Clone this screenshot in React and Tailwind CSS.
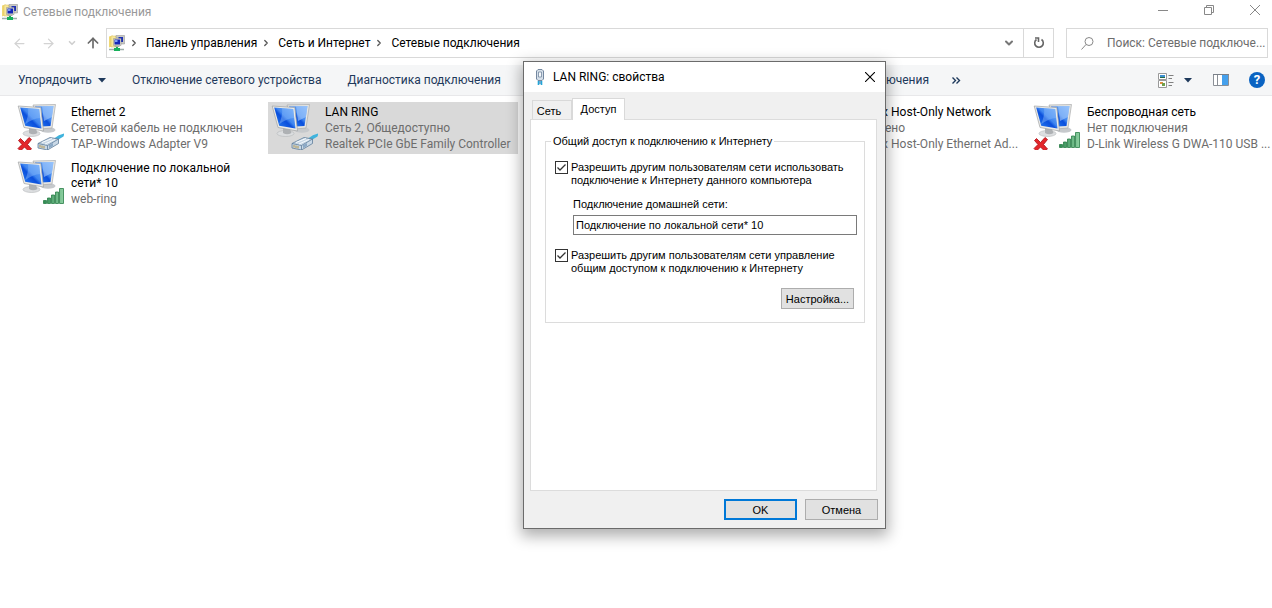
import { ArrowLeft, ArrowRight, ArrowUp, ChevronDown, ChevronRight } from 'lucide-react';

const breadcrumbs = ['Панель управления', 'Сеть и Интернет', 'Сетевые подключения'];

const commands = [
  'Отключение сетевого устройства',
  'Диагностика подключения',
  'Переименование подключения',
  'Просмотр состояния подключения',
];

const connections = [
  { id: 1, name: 'Ethernet 2', status: 'Сетевой кабель не подключен', device: 'TAP-Windows Adapter V9', kind: 'cable', off: true },
  { id: 2, name: 'LAN RING', status: 'Сеть 2, Общедоступно', device: 'Realtek PCIe GbE Family Controller', kind: 'cable', selected: true },
  { id: 3, name: 'VirtualBox Host-Only Network', status: 'Подключено', device: 'VirtualBox Host-Only Ethernet Ad...', kind: 'cable', place: 'col-start-4' },
  { id: 4, name: 'Беспроводная сеть', status: 'Нет подключения', device: 'D-Link Wireless G DWA-110 USB ...', kind: 'wifi', off: true },
  { id: 5, name: 'Подключение по локальной сети* 10', device: 'web-ring', kind: 'wifi' },
];

function FolderIcon() {
  return (
    <svg width="16" height="16" viewBox="0 0 16 16" className="shrink-0" aria-hidden="true">
      <path d="M0 1.5L4 0.5V11L0 12.5Z" fill="#f0d873" />
      <path d="M2 1h5v11H2z" fill="#f8e89a" stroke="#d8bc55" strokeWidth="0.5" />
      <path d="M7 0.5h8.5v8.5H11V2.5H7z" fill="#c9c9c4" stroke="#8f8f8c" strokeWidth="0.5" />
      <path d="M9.5 2h4.5v5h-4.5z" fill="#1d2fb4" />
      <path d="M4.5 3.5h7.5v7H4.5z" fill="#d8d6cc" stroke="#8b8b88" strokeWidth="0.5" />
      <path d="M5.5 4.5h5.5v5H5.5z" fill="#1526b8" />
      <path d="M6 5h2.5v2H6z" fill="#7d9cf5" />
      <path d="M5.5 11h5v1h-5z" fill="#a9a9a5" />
      <path d="M7 12h2v1h2v3H5v-3h2z" fill="#17b05b" />
      <path d="M0 13.8h5v1.4H0zM11 13.8h4v1.4h-4z" fill="#9fb0ab" />
    </svg>
  );
}

function AdapterIcon({ kind, off }) {
  return (
    <svg width="48" height="48" viewBox="0 0 48 48" className="shrink-0" aria-hidden="true">
      <defs>
        <linearGradient id="screen" x1="0" y1="1" x2="1" y2="0">
          <stop offset="0" stopColor="#2f86f5" />
          <stop offset="0.45" stopColor="#0a4fdc" />
          <stop offset="0.55" stopColor="#3f86f0" />
          <stop offset="1" stopColor="#7db4fa" />
        </linearGradient>
        <linearGradient id="bars" x1="0" y1="0" x2="1" y2="0">
          <stop offset="0" stopColor="#2d8a50" />
          <stop offset="1" stopColor="#8ccfa0" />
        </linearGradient>
      </defs>
      {/* rear monitor */}
      <ellipse cx="32" cy="28" rx="7.500" ry="2.800" fill="#c6c9cc" />
      <path d="M17 3L39.500 2.500L36 26L24 27Z" fill="#e6e6e3" stroke="#a9abac" strokeWidth="0.7" />
      <path d="M19 4.500L37.500 4L34.500 24L25 24.500Z" fill="url(#screen)" />
      <path d="M26 4.300L37.500 4L36 15L28 19Z" fill="#a9cdfb" opacity="0.6" />
      {/* front monitor */}
      <ellipse cx="15.500" cy="31.500" rx="8.500" ry="3" fill="#dcdee0" stroke="#b4b7b9" strokeWidth="0.6" />
      <path d="M13 26L20 27L21.500 31Q17 33.500 13 31Z" fill="#aeb1b4" />
      <path d="M2.200 4L24.800 5.500L27.500 29L8 25.500Z" fill="#ebebe8" stroke="#9fa2a4" strokeWidth="0.7" />
      <path d="M4.200 5.600L23.200 7L25.500 26.600L9.200 23.800Z" fill="url(#screen)" />
      <path d="M12 6.200L23.200 7L24.200 16Q17 16 9 22.500Q13 13 12 6.200Z" fill="#8cbcfa" opacity="0.45" />
      {kind === 'cable' && (
        <>
          <path d="M38 36.500Q43 32.500 48.500 31.500L47.500 34.500Q44 36 41 39.500Z" fill="#3fb3dd" />
          <path d="M22 41.500L34 35.500L42.500 37V41.500L31.500 48L22 46Z" fill="#c9d8e6" stroke="#5f7d9b" strokeWidth="0.8" />
          <path d="M22 41.500L31.500 43.500V48M31.500 43.500L42.500 37" fill="none" stroke="#5f7d9b" strokeWidth="0.8" />
          <path d="M26 40.500L36 36.500M29 42L39 37.500" stroke="#f5f9fc" strokeWidth="1" />
          <path d="M33 43L37 41V44L33 46.200Z" fill="#8ba9c6" />
          <path d="M24 43V45.500M26 43.500V46M28 44V46.500" stroke="#b3954a" strokeWidth="1" />
        </>
      )}
      {kind === 'wifi' && (
        <g fill="url(#bars)" stroke="#2a7d48" strokeWidth="0.8">
          <path d="M27.500 42.500h3v3h-3zM31.500 40h3v5.500h-3zM35.500 37h3v8.500h-3zM39.500 34h3v11.500h-3zM43.500 30.500h4v15h-4z" />
        </g>
      )}
      {off && (
        <path d="M4.500 36.500L8.500 40.500L13 35.500L15.500 37.500L11.500 42.500L15.500 47L12.500 49L8.500 45L4.500 49L2 46.500L6 42.500L2.500 38.500Z" fill="#e3262b" stroke="#a90e14" strokeWidth="0.8" />
      )}
    </svg>
  );
}

function Connection({ item }) {
  return (
    <li className={`flex h-[52px] min-w-0 pl-[2px] ${item.selected ? 'bg-[#d9d9d9]' : ''} ${item.place || ''}`}>
      <AdapterIcon kind={item.kind} off={item.off} />
      <div className="ml-[7px] min-w-0 flex-1 leading-4 text-[#6d6d6d]">
        <p className={item.status ? 'truncate pt-0.5 text-black' : 'pt-[3px] pr-8 leading-[15px] text-black'}>{item.name}</p>
        {item.status && <p className="truncate">{item.status}</p>}
        <p className="truncate">{item.device}</p>
      </div>
    </li>
  );
}

function TitleBar() {
  return (
    <header className="flex h-6 items-center pl-[2px] pr-3 text-[#999]">
      <FolderIcon />
      <h1 className="ml-[5px] flex-1">Сетевые подключения</h1>
      <div className="flex gap-9 pb-1">
        <button aria-label="Свернуть" className="flex h-5 w-[10px] items-center justify-center">
          <svg width="10" height="10" viewBox="0 0 10 10"><path d="M0 5.500h10" stroke="#888" /></svg>
        </button>
        <button aria-label="Развернуть" className="flex h-5 w-[10px] items-center justify-center">
          <svg width="10" height="10" viewBox="0 0 10 10" fill="none" stroke="#888"><path d="M0.500 2.500h7v7h-7zM2.500 2.500v-2h7v7h-2" /></svg>
        </button>
        <button aria-label="Закрыть" className="flex h-5 w-[10px] items-center justify-center">
          <svg width="10" height="10" viewBox="0 0 10 10"><path d="M0 0l10 10M10 0l-10 10" stroke="#888" /></svg>
        </button>
      </div>
    </header>
  );
}

function AddressBar() {
  return (
    <div className="mt-1 flex h-[30px] items-center pr-1">
      <nav className="flex w-[106px] items-center pl-3" aria-label="Навигация">
        <button aria-label="Назад"><ArrowLeft className="h-[15px] w-[15px] text-[#d3d3d3]" /></button>
        <button aria-label="Вперед" className="ml-3.5"><ArrowRight className="h-[15px] w-[15px] text-[#d3d3d3]" /></button>
        <button aria-label="Последние" className="ml-[11px]"><ChevronDown className="h-2.5 w-2.5 text-[#cfcfcf]" strokeWidth={4} /></button>
        <button aria-label="Вверх" className="ml-2"><ArrowUp className="h-4 w-4 text-[#6a6a6a]" strokeWidth={2.500} /></button>
      </nav>
      <div className="flex h-[30px] min-w-0 flex-1 items-center border border-[#d9d9d9]">
        <div className="flex min-w-0 flex-1 items-center pl-0.5">
          <FolderIcon />
          {breadcrumbs.map((crumb) => (
            <div key={crumb} className="flex items-center">
              <ChevronRight className="ml-1 mr-[7px] h-2.5 w-2.5 text-[#555]" strokeWidth={3} />
              <a href="#" className="text-black">{crumb}</a>
            </div>
          ))}
        </div>
        <button aria-label="Предыдущие расположения" className="px-2"><ChevronDown className="h-3 w-3 text-[#777]" strokeWidth={4} /></button>
        <button aria-label="Обновить" className="flex h-7 w-[30px] items-center justify-center border-l border-[#d9d9d9]">
          <svg width="12" height="12" viewBox="0 0 12 12" fill="none" stroke="#666" strokeWidth="1.6">
            <path d="M8.500 2.500A4.300 4.300 0 1 1 3.500 2.500" />
            <path d="M2 1h3.500v4" />
          </svg>
        </button>
      </div>
      <label className="ml-3 flex h-[30px] w-[202px] items-center border border-[#d9d9d9] pl-3.5">
        <svg width="13" height="13" viewBox="0 0 13 13" fill="none" stroke="#888" aria-hidden="true">
          <circle cx="8" cy="4.500" r="4" />
          <path d="M5 7.500L0.500 12.500" />
        </svg>
        <span className="sr-only">Поиск</span>
        <input type="text" placeholder="Поиск: Сетевые подключе..." className="ml-[13px] min-w-0 flex-1 outline-none placeholder:text-[#6d6d6d]" />
      </label>
    </div>
  );
}

function CommandBar() {
  return (
    <div className="mt-[7px] flex h-[31px] items-center border-b border-[#e8e8ea] bg-[#f5f6f7] pl-[18px] pr-[7px] text-[#1e395b]">
      <button className="flex items-center gap-1.5">
        Упорядочить
        <svg width="8" height="5" viewBox="0 0 8 5"><path d="M0 0h8L4 4.500z" fill="#1e395b" /></svg>
      </button>
      {commands.map((label) => (
        <button key={label} className="ml-[26px] whitespace-nowrap">{label}</button>
      ))}
      <button aria-label="Дополнительно" className="ml-[23px]">
        <svg width="9" height="7" viewBox="0 0 9 7" fill="none" stroke="#1e395b" strokeWidth="1.400"><path d="M0.500 0.500l3 3-3 3M4.500 0.500l3 3-3 3" /></svg>
      </button>
      <div className="ml-auto flex items-center">
        <button aria-label="Изменить представление" className="flex items-center gap-2.5">
          <svg width="16" height="15" viewBox="0 0 16 15">
            <path d="M0.500 0.500h8v6h-8zM0.500 7.500h8v7h-8z" fill="#fff" stroke="#999" />
            <path d="M2 2h5v3H2z" fill="#3c8fd0" />
            <path d="M2 4h5v1H2z" fill="#256b45" />
            <path d="M2 9h3v2H2z" fill="#e08b3e" />
            <path d="M4 10h3v3H4z" fill="#6fa04c" />
            <path d="M10.500 2.500h5M10.500 5.500h3.500M10.500 9.500h5M10.500 12.500h3.500" stroke="#808080" />
          </svg>
          <svg width="8" height="5" viewBox="0 0 8 5"><path d="M0 0h8L4 4.500z" fill="#1e395b" /></svg>
        </button>
        <button aria-label="Область просмотра" className="ml-[21px]">
          <svg width="16" height="12" viewBox="0 0 16 12">
            <path d="M0.500 0.500h15v11H0.500z" fill="#fff" stroke="#8a8f96" />
            <path d="M4.500 1v10" stroke="#8a8f96" />
            <path d="M9 1h6v10H9z" fill="#45a0ec" />
            <path d="M0 0.500h16" stroke="#7a8088" />
          </svg>
        </button>
        <button aria-label="Справка" className="ml-5 flex h-4 w-4 items-center justify-center rounded-full bg-[#0a63c2] text-[13px] font-bold leading-4 text-white">?</button>
      </div>
    </div>
  );
}

function PlugIcon() {
  return (
    <svg width="10" height="16" viewBox="0 0 10 16" className="shrink-0" aria-hidden="true">
      <path d="M1.500 2L3 0.500h4L8.500 2v8L7 11.500H3L1.500 10z" fill="#d5dfe9" stroke="#7488a0" />
      <path d="M3.500 3h3v5h-3z" fill="#f6f9fc" stroke="#7488a0" strokeWidth="0.8" />
      <path d="M3.500 12v4M6.500 12v4" stroke="#24a5d8" strokeWidth="1.600" />
      <path d="M5 12v3" stroke="#1272b0" />
    </svg>
  );
}

function CheckOption({ id, children }) {
  return (
    <div className="flex items-start">
      <span className="relative flex h-[13px] w-[13px] shrink-0">
        <input id={id} type="checkbox" defaultChecked className="peer h-[13px] w-[13px] appearance-none border border-[#333] bg-white" />
        <svg viewBox="0 0 13 13" className="pointer-events-none absolute inset-0 hidden h-[13px] w-[13px] peer-checked:block">
          <path d="M2.500 6.500L5 9L10.500 3.500" fill="none" stroke="#333" strokeWidth="1.300" />
        </svg>
      </span>
      <label htmlFor={id} className="ml-[3px] whitespace-nowrap leading-[13px]">{children}</label>
    </div>
  );
}

function PropertiesDialog() {
  return (
    <section
      role="dialog"
      aria-label="LAN RING: свойства"
      className="absolute left-[523px] top-[61px] w-[363px] border border-[#6b6b6b] bg-[#f0f0f0] font-['Liberation_Sans',sans-serif] text-[11px] text-black shadow-[0_5px_14px_2px_rgba(0,0,0,0.32)]"
    >
      <header className="flex h-[30px] items-center bg-white pl-[11px] pr-2.5 font-['Roboto','Noto_Sans',sans-serif] text-[12px]">
        <PlugIcon />
        <h2 className="ml-2 flex-1">LAN RING: свойства</h2>
        <button aria-label="Закрыть">
          <svg width="10" height="10" viewBox="0 0 10 10"><path d="M0 0l10 10M10 0l-10 10" stroke="#000" strokeWidth="1.100" /></svg>
        </button>
      </header>

      <div className="px-1.5 pt-1.5">
        <div role="tablist" className="flex items-end pl-[2px]">
          <button role="tab" aria-selected="false" className="h-[19px] w-10 border border-b-0 border-[#d9d9d9] pr-1.5 pt-0.5">Сеть</button>
          <button role="tab" aria-selected="true" className="relative -mb-px h-[22px] w-[53px] border border-b-0 border-[#d9d9d9] bg-white pb-0.5">Доступ</button>
        </div>
        <div role="tabpanel" className="h-[372px] w-[347px] border border-[#dcdcdc] bg-white pl-3.5 pr-[11px] pt-3.5">
          <fieldset className="border border-[#dcdcdc] pb-[13px] pl-[9px] pr-[7px]">
            <legend className="-ml-1 px-0.5 leading-[14px]">Общий доступ к подключению к Интернету</legend>
            <div className="pt-[13px]">
              <CheckOption id="allow-sharing">
                Разрешить другим пользователям сети использовать
                <br />
                подключение к Интернету данного компьютера
              </CheckOption>
            </div>
            <div className="pl-[18px] pt-2.5">
              <label htmlFor="home-network" className="block leading-[14px]">Подключение домашней сети:</label>
              <input
                id="home-network"
                type="text"
                readOnly
                value="Подключение по локальной сети* 10"
                className="mt-1 block h-5 w-full border border-[#7a7a7a] bg-white px-[2px] outline-none"
              />
            </div>
            <div className="pt-[14px]">
              <CheckOption id="allow-control">
                Разрешить другим пользователям сети управление
                <br />
                общим доступом к подключению к Интернету
              </CheckOption>
            </div>
            <div className="flex justify-end pr-[3px] pt-[13px]">
              <button className="h-[21px] w-[73px] border border-[#adadad] bg-[#e1e1e1]">Настройка...</button>
            </div>
          </fieldset>
        </div>
      </div>

      <footer className="flex justify-end gap-2 px-[7px] py-2">
        <button className="h-[21px] w-[73px] border-2 border-[#0078d7] bg-[#e1e1e1]">OK</button>
        <button className="h-[21px] w-[73px] border border-[#adadad] bg-[#e1e1e1]">Отмена</button>
      </footer>
    </section>
  );
}

export default function App() {
  return (
    <div className="relative min-h-screen overflow-hidden bg-white font-['Roboto','Noto_Sans',sans-serif] text-[12px] leading-4">
      <TitleBar />
      <AddressBar />
      <CommandBar />
      <main className="pl-3.5 pt-1.5">
        <ul className="grid grid-cols-[repeat(4,250px)_minmax(0,1fr)] gap-1">
          {connections.map((item) => (
            <Connection key={item.id} item={item} />
          ))}
        </ul>
      </main>
      <PropertiesDialog />
    </div>
  );
}
